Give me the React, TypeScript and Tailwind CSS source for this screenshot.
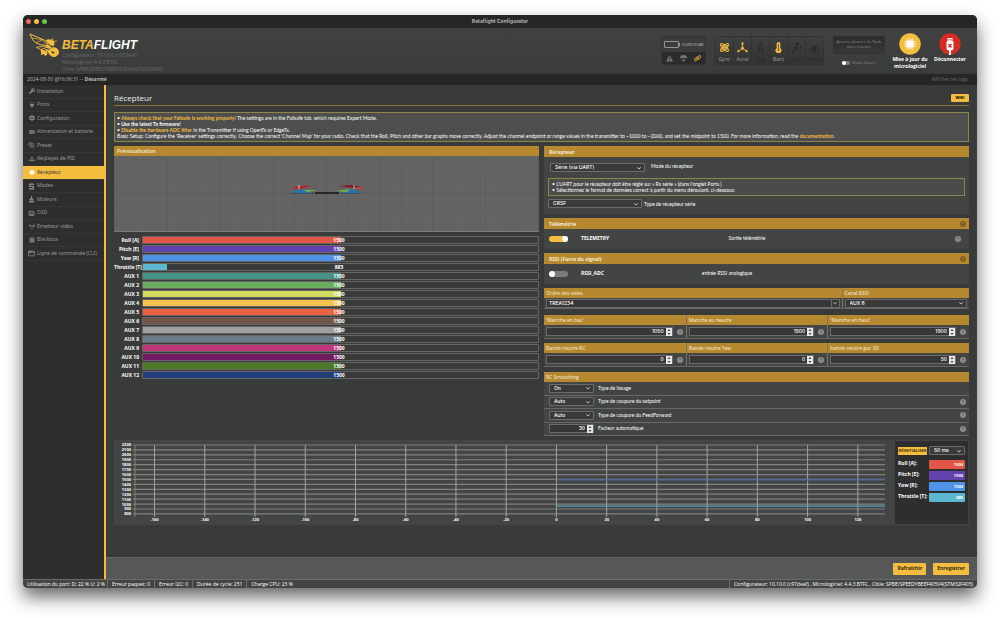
import type { ReactNode } from "react";
import clsx from "clsx";
import {
  FaBatteryFull,
  FaChevronDown,
  FaCircleQuestion,
  FaGear,
  FaMicrochip,
  FaPlug,
  FaRobot,
  FaSitemap,
  FaTowerBroadcast,
  FaWrench,
} from "react-icons/fa6";
import { AppWindow, Captions } from "lucide-react";

const tabs = [
  { label: "Installation", icon: <FaWrench /> },
  { label: "Ports", icon: <FaPlug /> },
  { label: "Configuration", icon: <FaGear /> },
  { label: "Alimentation et batterie", icon: <FaBatteryFull /> },
  { label: "Preset", icon: <PresetIcon /> },
  { label: "Réglages de PID", icon: <FaSitemap /> },
  { label: "Récepteur", icon: <FaRobot />, active: true },
  { label: "Modes", icon: <ModesIcon /> },
  { label: "Moteurs", icon: <MotorIcon /> },
  { label: "OSD", icon: <Captions size={7} strokeWidth={3} /> },
  { label: "Émetteur vidéo", icon: <FaTowerBroadcast /> },
  { label: "Blackbox", icon: <FaMicrochip /> },
  { label: "Ligne de commande (CLI)", icon: <AppWindow size={7} strokeWidth={3} /> },
];

const channels = [
  { name: "Roll [A]", value: 1500, color: "bg-[#e25647]" },
  { name: "Pitch [E]", value: 1500, color: "bg-[#6342ae]" },
  { name: "Yaw [R]", value: 1500, color: "bg-[#4f93e8]" },
  { name: "Throttle [T]", value: 885, color: "bg-[#5ab9d0]" },
  { name: "AUX 1", value: 1500, color: "bg-[#479487]" },
  { name: "AUX 2", value: 1500, color: "bg-[#6bad60]" },
  { name: "AUX 3", value: 1500, color: "bg-[#d1da5f]" },
  { name: "AUX 4", value: 1500, color: "bg-[#f5c24f]" },
  { name: "AUX 5", value: 1500, color: "bg-[#ea6340]" },
  { name: "AUX 6", value: 1500, color: "bg-[#72564b]" },
  { name: "AUX 7", value: 1500, color: "bg-[#9e9e9e]" },
  { name: "AUX 8", value: 1500, color: "bg-[#687c88]" },
  { name: "AUX 9", value: 1500, color: "bg-[#c1357b]" },
  { name: "AUX 10", value: 1500, color: "bg-[#721a62]" },
  { name: "AUX 11", value: 1500, color: "bg-[#4a7a27]" },
  { name: "AUX 12", value: 1500, color: "bg-[#20407c]" },
];

const MIN = 800;
const MAX = 2200;

function PresetIcon() {
  return (
    <svg width="7" height="7" viewBox="0 0 14 14" fill="none" stroke="currentColor" strokeWidth="2">
      <circle cx="4.5" cy="4.5" r="3" />
      <path d="M7 7l5.5 5.5M8.5 3.5h3M9.5 6.5h3M4 10.5h3" />
    </svg>
  );
}

function ModesIcon() {
  return (
    <svg width="7" height="7" viewBox="0 0 14 14" fill="currentColor">
      <path d="M2 1h10v3H5v2h7v3l-2 4H2v-3h6l1-2H2z" />
      <circle cx="11" cy="12" r="1.5" />
    </svg>
  );
}

function MotorIcon() {
  return (
    <svg width="7" height="7" viewBox="0 0 14 14" fill="currentColor">
      <path d="M6 0h2v4l3 2v3H3V6l3-2zM2 10h10v3H2z" />
    </svg>
  );
}

function BeeLogo() {
  return (
    <svg className="mt-[5px] shrink-0" width="31" height="25" viewBox="0 0 93 75">
      <g fill="none" stroke="#f5bd3e" strokeWidth="3" strokeLinejoin="round">
        <path d="M3 3L50 23L58 38L34 35Q10 29 3 3Z" />
        <path d="M9 15L40 20L52 34M21 29L40 21" strokeWidth="2" />
        <path d="M48 39L22 43L35 50L52 43" strokeWidth="2.5" />
      </g>
      <g fill="#f5bd3e">
        <path d="M51 22Q58 17 67 20L73 15L71 23L88 23L75 27Q79 33 74 39L63 37Q56 31 51 22Z" />
        <path d="M57 36L68 42L62 48L47 42Z" />
        <path d="M45 46L59 51Q66 47 72 42Q88 43 90 57Q90 68 78 70L84 72Q64 74 58 59Z" />
        <path d="M35 48L52 54L56 62L49 70L44 62L37 67Z" />
      </g>
      <path d="M66 55Q73 53 77 59L71 62Z" fill="#3d3f3e" />
    </svg>
  );
}

function Help({ onGold = false }: { onGold?: boolean }) {
  return (
    <FaCircleQuestion size={6} className={clsx("shrink-0", onGold ? "text-[#7f6023]" : "text-[#8d8e8d]")} />
  );
}

function Select({
  id,
  value,
  label,
  className,
}: {
  id: string;
  value: string;
  label?: string;
  className?: string;
}) {
  return (
    <div
      className={clsx(
        "flex h-[9px] shrink-0 items-center rounded-[1px] border border-[#6b6c6b] bg-[#393a39] pr-[3px] text-white",
        className,
      )}
    >
      <select
        id={id}
        aria-label={label}
        className="h-full min-w-0 flex-1 appearance-none bg-transparent pl-1 font-[Inter,sans-serif] text-[5px] leading-[7px] font-medium outline-none"
      >
        <option>{value}</option>
      </select>
      <FaChevronDown size={4} />
    </div>
  );
}

function NumberBox({ id, value, className }: { id: string; value: number; className?: string }) {
  return (
    <div className={clsx("flex h-[9px] items-center border border-[#6b6c6b] bg-[#363736]", className)}>
      <input
        id={id}
        type="number"
        defaultValue={value}
        className="min-w-0 flex-1 bg-transparent pr-[2px] text-right font-[Inter,sans-serif] text-[5px] leading-[7px] font-medium text-white outline-none [appearance:textfield] [&::-webkit-inner-spin-button]:appearance-none"
      />
      <svg className="shrink-0" width="6" height="8" viewBox="0 0 12 16">
        <rect width="12" height="16" fill="#e8e8e8" />
        <path d="M6 2l3 4H3zM6 14l3-4H3z" fill="#444" />
      </svg>
    </div>
  );
}

function Panel({ title, help = false, children }: { title: string; help?: boolean; children: ReactNode }) {
  return (
    <section className="rounded-[1px] bg-[#434544]">
      <h2 className="flex h-[11px] items-center justify-between bg-[#b68930] pr-[3px] pl-[5px] text-[5px] leading-[8px] font-bold text-[#f4ecd9]">
        {title}
        {help && <Help onGold />}
      </h2>
      {children}
    </section>
  );
}

function Toggle({ id, on = false }: { id: string; on?: boolean }) {
  return (
    <input
      id={id}
      type="checkbox"
      role="switch"
      defaultChecked={on}
      className="flex h-[6px] w-[19px] shrink-0 appearance-none items-center rounded-full bg-[#7b7c7b] before:size-[6px] before:rounded-full before:bg-white checked:justify-end checked:bg-[#f5bd3e]"
    />
  );
}

function FeatureRow({
  name,
  text,
  on = false,
  help = false,
  textClass,
}: {
  name: string;
  text: string;
  on?: boolean;
  help?: boolean;
  textClass: string;
}) {
  return (
    <div className="flex h-5 items-center pr-2 pl-[5px] text-[5px] text-white">
      <Toggle id={name} on={on} />
      <label htmlFor={name} className="ml-[13px] w-[100px] font-bold">
        {name}
      </label>
      <span className={clsx("text-center font-[Lato,sans-serif]", textClass)}>{text}</span>
      {help && (
        <span className="ml-auto">
          <Help />
        </span>
      )}
    </div>
  );
}

function NumberTable({ items }: { items: { id: string; label: string; value: number }[] }) {
  return (
    <div className="grid grid-cols-3 border-b border-[#666766] bg-[#434544]">
      {items.map((item, i) => (
        <div key={item.id} className={clsx(i > 0 && "border-l border-[#7d7556]")}>
          <label
            htmlFor={item.id}
            className="block h-[10px] bg-[#b68930] px-[2px] text-[5px] leading-[10px] font-medium text-[#f6efdf]"
          >
            {item.label}
          </label>
          <div className="flex h-[13px] items-center gap-1 pr-[3px] pl-[2px]">
            <NumberBox id={item.id} value={item.value} className="flex-1" />
            <Help />
          </div>
        </div>
      ))}
    </div>
  );
}

function Quad() {
  return (
    <g transform="translate(177 29)">
      <path d="M24 7h24v2H24z" fill="#262626" />
      <path d="M1 8h22M50 8h20" stroke="#3a3a3a" />
      <path d="M3 6q8-3 15 0l3 2H2zM52 6q8-3 15 0l3 2H50z" fill="#2474b4" />
      <path d="M12 5l14 0-9 2zM45 6l14-2-3 3z" fill="#72b83e" />
      <path d="M0 4l8-3 14-1-11 4z" fill="#b3262b" />
      <path d="M47 1l15-1 11 3-9 0z" fill="#8a1518" />
      <path d="M64 2l10 1-7 1z" fill="#e04444" />
      <path d="M8 0v4M63 0v4" stroke="#bcd0dd" />
    </g>
  );
}

function Preview() {
  const cols = Array.from({ length: 41 }, (_, i) => i);
  const rows = Array.from({ length: 7 }, (_, i) => i);
  return (
    <svg className="block h-[75px] w-full" viewBox="0 0 425 75" preserveAspectRatio="xMidYMid slice">
      <rect width="425" height="75" fill="#646464" />
      {cols.map((i) => (
        <path
          key={i}
          d={`M${212.5 + (i - 20) * 10.6} 0V75`}
          stroke={i % 5 === 0 ? "#595959" : "#5f5f5f"}
          strokeWidth="0.6"
        />
      ))}
      {rows.map((i) => (
        <path
          key={i}
          d={`M0 ${37.5 + (i - 3) * 10.6}H425`}
          stroke={i === 3 ? "#595959" : "#5f5f5f"}
          strokeWidth="0.6"
        />
      ))}
      <Quad />
    </svg>
  );
}

function ChannelBars() {
  return (
    <ul className="mt-1 grid gap-px text-[5px] leading-[8px] font-bold text-white">
      {channels.map((c) => (
        <li key={c.name} className="flex h-[8px]">
          <span className="w-[28px] shrink-0 pr-[3px] text-right whitespace-nowrap">{c.name}</span>
          <div className="relative flex-1 rounded-[1px] border border-[#656665]">
            <div
              className={clsx("h-full", c.color)}
              style={{ width: `${((c.value - MIN) / (MAX - MIN)) * 100}%` }}
            />
            <span className="absolute inset-0 pr-[3px] text-center leading-[7px]">{c.value}</span>
          </div>
        </li>
      ))}
    </ul>
  );
}

function Plot() {
  const y = (v: number) => 74 - ((v - MIN) / (MAX - MIN)) * 69;
  const x = (t: number) => 443 + t * 2.515;
  const values = Array.from({ length: 15 }, (_, i) => MIN + i * 100);
  const times = Array.from({ length: 15 }, (_, i) => -160 + i * 20);
  return (
    <svg className="block h-auto min-w-0 flex-1" viewBox="0 0 781 85">
      <g stroke="#7f807f" strokeWidth="1.2">
        {values.map((v) => (
          <path key={v} d={`M19 ${y(v)}H772`} />
        ))}
      </g>
      <path d="M21 5V77" stroke="#7f807f" />
      <g stroke="#a3a4a3" strokeWidth="1">
        {times.map((t) => (
          <path key={t} d={`M${x(t)} 5V77`} />
        ))}
      </g>
      <path d={`M443 ${y(1500) + 0.5}H772`} stroke="#4a64a4" strokeWidth="1.3" />
      <path d={`M443 ${y(960)}H772`} stroke="#4ea6ba" strokeWidth="1.2" />
      <g fill="#fff" fontSize="4" fontWeight="700">
        {values.map((v) => (
          <text key={v} x="17" y={y(v) + 1.5} textAnchor="end">
            {v}
          </text>
        ))}
        {times.map((t) => (
          <text key={t} x={x(t)} y="81" textAnchor="middle">
            {t}
          </text>
        ))}
      </g>
    </svg>
  );
}

const gold = "#f5bd3e";
const off = "#282928";

const sensors = [
  {
    name: "Gyro",
    on: true,
    icon: (
      <g fill="none" stroke={gold} strokeWidth="3">
        <ellipse cx="15" cy="15" rx="14" ry="5" transform="rotate(45 15 15)" />
        <ellipse cx="15" cy="15" rx="14" ry="5" transform="rotate(-45 15 15)" />
        <path d="M4 11q11-8 22 0M4 19q11 8 22 0" strokeWidth="2" />
        <circle cx="15" cy="15" r="2" fill={gold} />
      </g>
    ),
  },
  {
    name: "Accel",
    on: true,
    icon: (
      <g fill={gold} stroke={gold} strokeWidth="2.5">
        <path d="M15 4v13L4 25M15 17l11 8" fill="none" />
        <path d="M15 0l3 6h-6zM1 28l2-7 4 5zM29 28l-2-7-4 5z" strokeWidth="1" />
        <circle cx="15" cy="17" r="3" />
      </g>
    ),
  },
  {
    name: "Mag",
    icon: (
      <g fill="none" stroke={off} strokeWidth="2.5">
        <path d="M15 1L9 12h12zM10 29V17l10 12V17" />
      </g>
    ),
  },
  {
    name: "Baro",
    on: true,
    icon: (
      <g fill={gold}>
        <path d="M15 0a5 5 0 0 1 5 5v12a8 8 0 1 1-10 0V5a5 5 0 0 1 5-5z" />
        <path d="M15 5v15" stroke="#3a3b3a" strokeWidth="2" />
        <circle cx="15" cy="22" r="3" fill="#8b6a22" />
      </g>
    ),
  },
  {
    name: "GPS",
    icon: (
      <g fill={off}>
        <path d="M18 0l5 5-6 6-5-5zM24 12l5-3 1 8-6 3zM12 10l8 8-5 5-8-8zM3 16a12 12 0 0 0 11 12L3 28z" />
      </g>
    ),
  },
  {
    name: "Sonar",
    icon: (
      <g fill="none" stroke={off} strokeWidth="3">
        <path d="M9 14q6-6 12 0M4 19q11-14 22 0M2 23q13 10 26 0" />
        <circle cx="15" cy="19" r="3" fill={off} />
      </g>
    ),
  },
];

function Header() {
  return (
    <header className="flex h-[46px] items-start bg-linear-to-b from-[#404241] to-[#3a3c3b] pr-2 pl-[6px]">
      <BeeLogo />
      <div className="mt-[11px] ml-[2px] text-[5px] leading-[7px] text-[#676968]">
        <p className="font-['Liberation_Sans',sans-serif] text-[12px] leading-[13px] font-bold text-white italic">
          <span className="text-[#f5bd3e]">BETA</span>FLIGHT
        </p>
        <p>Configurateur: 10.10.0 (c97deaf)</p>
        <p>Micrologiciel: 4.4.3 BTFL</p>
        <p>Cible: SPBE/SPEEDYBEEF405V4(STM32F405)</p>
      </div>

      <div className="mt-2 ml-auto w-[45px] rounded-[2px] border border-[#333534] bg-[#2b2c2b] text-[4px]">
        <div className="flex h-[15px] items-center gap-[2px] bg-[#3b3d3c] pl-[2px] text-[#c6c7c6]">
          <svg width="16" height="7" viewBox="0 0 32 14" fill="none" stroke="#b0b1b0" strokeWidth="1.5">
            <rect x="1" y="1" width="28" height="12" rx="1" />
            <path d="M31 4v6" />
          </svg>
          <span className="whitespace-nowrap">0.00V (USB)</span>
        </div>
        <div className="flex h-3 items-center justify-around">
          <svg width="7" height="7" viewBox="0 0 14 14" fill="#747574">
            <path d="M7 0l7 13H0z" />
            <path d="M7 4v5M7 10v2" stroke="#2b2c2b" strokeWidth="1.5" />
          </svg>
          <svg width="7" height="7" viewBox="0 0 14 14" fill="#747574">
            <path d="M0 6a7 6 0 0 1 14 0zM1 6l6 8 6-8-6 5z" />
            <path d="M5 9h4v3H5z" />
          </svg>
          <svg width="7" height="7" viewBox="0 0 14 14" fill="none" stroke="#c09232" strokeWidth="2">
            <rect x="0" y="6" width="9" height="4" rx="2" transform="rotate(-45 4.5 8)" />
            <rect x="5" y="3" width="9" height="4" rx="2" transform="rotate(-45 9.5 5)" />
          </svg>
        </div>
      </div>

      <ul className="mt-2 ml-2 grid w-[110px] grid-cols-6 overflow-hidden rounded-[2px] border border-[#333534]">
        {sensors.map((s) => (
          <li
            key={s.name}
            className={clsx(
              "flex h-[27px] flex-col items-center border-l border-[#313332] bg-linear-to-b from-[#3e403f] to-[#323433] pt-[5px] text-[5px] leading-[8px] first:border-l-0",
              s.on ? "text-[#9c9d9c]" : "text-[#282928]",
            )}
          >
            <svg width="11" height="11" viewBox="0 0 30 30" className="shrink-0">
              {s.icon}
            </svg>
            <span className="mt-[2px]">{s.name}</span>
          </li>
        ))}
      </ul>

      <div className="mt-2 ml-[9px] w-[52px] text-center text-[4px] leading-[5px] text-[#8b8c8b]">
        <p className="rounded-[2px] border border-[#313332] bg-linear-to-b from-[#2a2b2a] to-[#373837] px-[1px] pt-[2px] pb-1">
          Aucune donnée de flash puce trouvée
        </p>
        <label className="mt-[6px] flex items-center justify-center gap-[2px] text-[#858685]">
          <input
            type="checkbox"
            role="switch"
            className="flex h-1 w-2 appearance-none items-center rounded-full bg-[#7b7c7b] before:size-1 before:rounded-full before:bg-white"
          />
          Mode Expert
        </label>
      </div>

      <button className="mt-[5px] ml-1 flex w-[42px] flex-col items-center text-[5px] leading-[7px] font-bold text-white">
        <svg width="22" height="22" viewBox="0 0 44 44">
          <circle cx="22" cy="22" r="21.5" fill={gold} />
          <rect x="15" y="15" width="14" height="14" rx="2" fill="#fff" />
          <path
            d="M17 11v22M20.5 11v22M24 11v22M27 11v22M11 17h22M11 20.5h22M11 24h22M11 27h22"
            stroke="#fff"
            strokeWidth="1.4"
          />
        </svg>
        <span className="mt-px">Mise à jour du micrologiciel</span>
      </button>
      <button className="mt-[5px] flex w-[38px] flex-col items-center text-[5px] leading-[7px] font-bold text-white">
        <svg width="22" height="22" viewBox="0 0 44 44">
          <circle cx="22" cy="22" r="21.5" fill="#d52b20" />
          <path d="M17 10h10v7h2v14q0 4-5 4v9h-4v-9q-5 0-5-4V17h2z" fill="#fff" />
          <path d="M19 12h2v3h-2zM23 12h2v3h-2z" fill="#d52b20" />
          <path d="M19 22l6 7M25 22l-6 7" stroke="#d52b20" strokeWidth="2.5" />
        </svg>
        <span className="mt-px">Déconnecter</span>
      </button>
    </header>
  );
}

function Sidebar() {
  return (
    <nav className="w-[83px] shrink-0 border-r-2 border-[#f5bd3e] bg-[#2e2e2e]">
      <ul className="grid h-[176px] auto-rows-fr">
        {tabs.map((t) => (
          <li key={t.label} className="border-b border-[#363636]">
            <a
              href="#"
              className={clsx(
                "flex h-full items-center gap-[2px] pl-[5px] font-['Noto_Sans',sans-serif] text-[5px] whitespace-nowrap",
                t.active ? "bg-[#f5bd3e] text-[#3b3b3b]" : "text-[#999999]",
              )}
            >
              <span
                className={clsx(
                  "flex w-[7px] shrink-0 justify-center text-[6px]",
                  t.active ? "text-white" : "text-[#858585]",
                )}
              >
                {t.icon}
              </span>
              {t.label}
            </a>
          </li>
        ))}
      </ul>
    </nav>
  );
}

const smoothing = [
  { id: "rc-type", label: "Type de lissage", value: "On" },
  { id: "rc-setpoint", label: "Type de coupure du setpoint", value: "Auto", help: true },
  { id: "rc-ff", label: "Type de coupure du FeedForward", value: "Auto", help: true },
  { id: "rc-factor", label: "Facteur automatique", value: 30, help: true },
];

function ReceiverSettings() {
  return (
    <div>
      <Panel title="Récepteur">
        <div className="h-[57px] px-1 pt-[6px] font-[Lato,sans-serif] text-[5px] leading-[6px] text-white">
          <div className="flex gap-[6px] pl-[2px]">
            <Select id="rx-mode" value="Série (via UART)" className="w-[95px]" />
            <label htmlFor="rx-mode">Mode du récepteur</label>
          </div>
          <div className="mt-[6px] border border-[#8f854c] bg-[#4a4b4a] px-[3px] py-[2px]">
            <p>• L'UART pour le récepteur doit être réglé sur « Rx série » (dans l'onglet Ports )</p>
            <p>• Sélectionnez le format de données correct à partir du menu déroulant, ci-dessous:</p>
          </div>
          <div className="mt-[3px] flex items-center gap-[2px]">
            <Select id="rx-serial" value="CRSF" className="w-[94px]" />
            <label htmlFor="rx-serial">Type de récepteur série</label>
          </div>
        </div>
      </Panel>
      <div className="mt-1">
        <Panel title="Télémétrie" help>
          <FeatureRow name="TELEMETRY" text="Sortie télémétrie" textClass="w-[132px]" on help />
        </Panel>
      </div>
      <div className="mt-1">
        <Panel title="RSSI (Force du signal)" help>
          <FeatureRow name="RSSI_ADC" text="entrée RSSI analogique" textClass="w-[92px]" />
        </Panel>
      </div>

      <div className="mt-1 grid grid-cols-[7fr_3fr] border-b border-[#666766] bg-[#434544] text-[5px] leading-[10px] font-medium text-[#f6efdf]">
        <div>
          <label htmlFor="map" className="block h-[10px] bg-[#b68930] px-[2px]">
            Ordre des voies
          </label>
          <div className="flex h-[10px] items-center px-[2px]">
            <input
              id="map"
              defaultValue="TREA1234"
              className="h-[9px] min-w-0 flex-1 border border-[#6b6c6b] bg-[#363736] pl-[2px] font-[Inter,sans-serif] text-[5px] font-medium text-white outline-none"
            />
            <button
              aria-label="Choisir"
              className="flex h-[9px] w-[8px] items-center justify-center border border-l-0 border-[#6b6c6b] bg-[#363736]"
            >
              <FaChevronDown size={4} />
            </button>
          </div>
        </div>
        <div className="border-l border-[#7d7556]">
          <label htmlFor="rssi" className="block h-[10px] bg-[#b68930] px-[2px]">
            Canal RSSI
          </label>
          <div className="flex h-[10px] items-center px-[2px]">
            <Select id="rssi" value="AUX 8" className="flex-1" />
          </div>
        </div>
      </div>

      <div className="mt-[6px]">
        <NumberTable
          items={[
            { id: "stick-min", label: "'Manche en bas'", value: 1050 },
            { id: "stick-center", label: "Manche au neutre", value: 1500 },
            { id: "stick-max", label: "'Manche en haut'", value: 1900 },
          ]}
        />
      </div>
      <div className="mt-1">
        <NumberTable
          items={[
            { id: "deadband", label: "Bande neutre RC", value: 0 },
            { id: "yaw-deadband", label: "Bande neutre Yaw", value: 0 },
            { id: "3d-deadband", label: "bande neutre gaz 3D", value: 50 },
          ]}
        />
      </div>

      <section className="mt-[5px] bg-[#434544]">
        <h2 className="h-[10px] bg-[#b68930] px-[2px] text-[5px] leading-[10px] font-medium text-[#f6efdf]">
          RC Smoothing
        </h2>
        <div className="grid h-[54px] auto-rows-fr">
          {smoothing.map((s) => (
            <div
              key={s.id}
              className="flex items-center border-b border-[#666766] pr-[3px] pl-[5px] font-[Lato,sans-serif] text-[5px] text-white"
            >
              {typeof s.value === "number" ? (
                <NumberBox id={s.id} value={s.value} className="w-[45px]" />
              ) : (
                <Select id={s.id} value={s.value} className="w-[45px]" />
              )}
              <label htmlFor={s.id} className="ml-1 flex-1">
                {s.label}
              </label>
              {s.help && <Help />}
            </div>
          ))}
        </div>
      </section>
    </div>
  );
}

function PlotControls() {
  return (
    <div className="m-px w-[73px] shrink-0 bg-[#2e2e2e] px-[3px] pt-[5px] text-[5px] font-bold text-white">
      <div className="flex items-center justify-between">
        <button className="h-[8px] w-[29px] overflow-hidden bg-[#f5bd3e] text-[4px] leading-[8px] font-bold whitespace-nowrap text-[#3a3012]">
          RÉINITIALISER
        </button>
        <Select id="refresh" label="Intervalle" value="50 ms" className="w-[36px]" />
      </div>
      <dl className="mt-1 grid gap-px">
        {channels.slice(0, 4).map((c) => (
          <div key={c.name} className="flex h-[10px] items-center justify-between">
            <dt className="whitespace-nowrap">{c.name}:</dt>
            <dd className={clsx("h-[9px] w-[36px] rounded-[1px] pr-[2px] text-right text-[4px] leading-[9px]", c.color)}>
              {c.value}
            </dd>
          </div>
        ))}
      </dl>
    </div>
  );
}

export default function App() {
  return (
    <div className="flex min-h-screen flex-col bg-white px-[23px] pt-[15px] pb-[30px] font-['Open_Sans',sans-serif]">
      <div className="flex flex-1 flex-col rounded-[5px] shadow-[0_9px_18px_rgba(0,0,0,0.6)]">
        <div className="flex flex-1 flex-col overflow-hidden rounded-[5px] bg-[#393b3a]">
          <div className="grid h-[13px] shrink-0 grid-cols-3 items-center bg-[#262626] px-[3px]">
            <div className="flex gap-[3px]">
              <span className="size-[5px] rounded-full bg-[#ec6a5e]" />
              <span className="size-[5px] rounded-full bg-[#f4bf4f]" />
              <span className="size-[5px] rounded-full bg-[#61c554]" />
            </div>
            <h1 className="text-center font-[Inter,sans-serif] text-[5px] font-bold text-[#b5b5b5]">
              Betaflight Configurator
            </h1>
          </div>

          <Header />

          <div className="flex h-[11px] shrink-0 items-center justify-between bg-[#262626] pr-[9px] pl-1 text-[5px] text-[#b9b9b9]">
            <p>
              2024-08-30 @16:06:31 -- <strong>Désarmé</strong>
            </p>
            <a href="#" className="text-[#6c6c6c]">
              Afficher les logs
            </a>
          </div>

          <div className="flex flex-1">
            <Sidebar />
            <div className="flex min-w-0 flex-1 flex-col">
              <main className="flex-1 px-2">
                <div className="flex h-[21px] items-center justify-between border-b border-[#8f7034] pt-[5px]">
                  <h1 className="text-[8px] leading-[12px] text-[#ededed]">Récepteur</h1>
                  <a
                    href="#"
                    className="h-[8px] w-[18px] rounded-[1px] bg-[#f5bd3e] text-center text-[4px] leading-[8px] font-bold text-black"
                  >
                    WIKI
                  </a>
                </div>

                <div className="mt-[6px] border border-[#8f854c] bg-[#4d4e4d] p-[2px] font-[Lato,sans-serif] text-[5px] leading-[6px] text-white">
                  <p>
                    • <strong className="text-[#f5bd3e]">Always check that your Failsafe is working properly!</strong>{" "}
                    The settings are in the Failsafe tab, which requires Expert Mode.
                  </p>
                  <p>
                    • <strong>Use the latest Tx firmware!</strong>
                  </p>
                  <p>
                    • <strong className="text-[#f5bd3e]">Disable the hardware ADC filter</strong> in the Transmitter if
                    using OpenTx or EdgeTx.
                  </p>
                  <p>
                    Basic Setup: Configure the 'Receiver' settings correctly. Choose the correct 'Channel Map' for your
                    radio. Check that the Roll, Pitch and other bar graphs move correctly. Adjust the channel endpoint
                    or range values in the transmitter to ~1000 to ~2000, and set the midpoint to 1500. For more
                    information, read the{" "}
                    <a href="#" className="font-bold text-[#f5bd3e]">
                      documentation
                    </a>
                    .
                  </p>
                </div>

                <div className="mt-1 grid grid-cols-2 gap-[5px]">
                  <div>
                    <section className="border-b border-[#7a7b7a]">
                      <h2 className="h-[10px] rounded-t-[1px] bg-[#b68930] px-[3px] text-[5px] leading-[10px] font-semibold text-[#f4ecd9]">
                        Prévisualisation
                      </h2>
                      <Preview />
                    </section>
                    <ChannelBars />
                  </div>
                  <ReceiverSettings />
                </div>

                <section className="mt-1 flex bg-[#434544]">
                  <Plot />
                  <PlotControls />
                </section>
              </main>

              <div className="flex h-[22px] shrink-0 items-center justify-end gap-[7px] border-t border-[#646665] bg-[#565857] px-2 text-[5px] font-bold text-[#2f2611]">
                <button className="h-[12px] rounded-[1px] bg-[#f5bd3e] px-1">Rafraîchir</button>
                <button className="h-[12px] rounded-[1px] bg-[#f5bd3e] px-1">Enregistrer</button>
              </div>
            </div>
          </div>

          <footer className="flex h-[9px] shrink-0 items-center border-t border-[#6a6b6a] bg-[#434544] text-[5px] leading-[8px] whitespace-nowrap text-white">
            <span className="w-[85px] border-r border-[#6a6b6a] pl-1">Utilisation du port: D: 22 % U: 2 %</span>
            <span className="border-r border-[#6a6b6a] px-1">Erreur paquet: 0</span>
            <span className="border-r border-[#6a6b6a] px-1">Erreur I2C: 0</span>
            <span className="border-r border-[#6a6b6a] px-1">Durée de cycle: 251</span>
            <span className="px-1">Charge CPU: 23 %</span>
            <span className="ml-auto border-l border-[#6a6b6a] px-1">
              Configurateur: 10.10.0 (c97deaf) , Micrologiciel: 4.4.3 BTFL , Cible: SPBE/SPEEDYBEEF405V4(STM32F405)
            </span>
          </footer>
        </div>
      </div>
    </div>
  );
}
